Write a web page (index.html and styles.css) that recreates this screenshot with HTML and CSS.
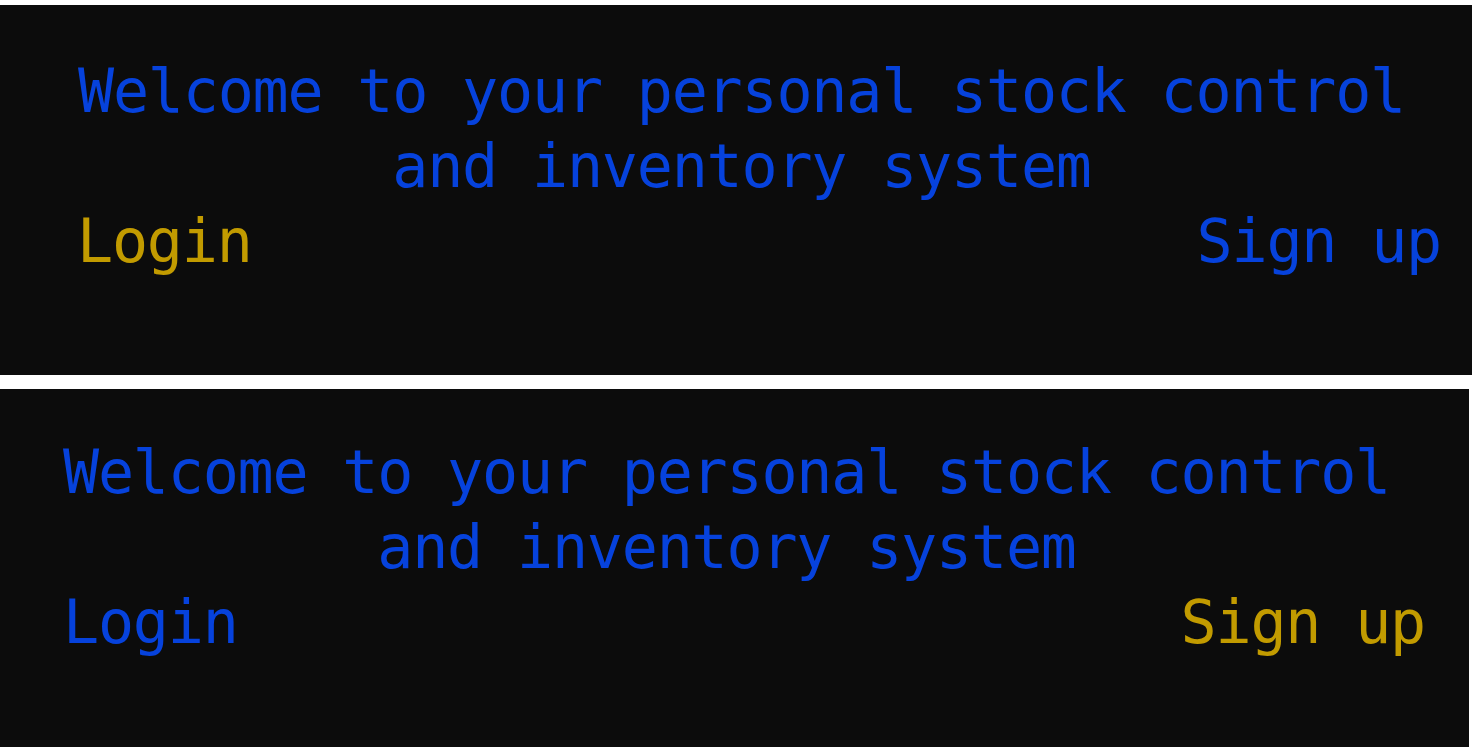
FILE: index.html
```html
<!DOCTYPE html>
<html lang="en">
<head>
<meta charset="utf-8">
<title>Stock control</title>
<link rel="stylesheet" href="styles.css">
</head>
<body>
  <section class="hero hero-login">
    <h1 class="title">Welcome to your personal stock control and inventory system</h1>
    <nav class="links">
      <a class="link active" href="#">Login</a>
      <a class="link" href="#">Sign up</a>
    </nav>
  </section>
  <section class="hero hero-signup">
    <h1 class="title">Welcome to your personal stock control and inventory system</h1>
    <nav class="links">
      <a class="link" href="#">Login</a>
      <a class="link active" href="#">Sign up</a>
    </nav>
  </section>
</body>
</html>
```
FILE: styles.css
```css
html, body {
  margin: 0;
  padding: 0;
  background: #ffffff;
}
body {
  padding-top: 5px;
  display: flex;
  flex-direction: column;
  gap: 14px;
  height: 747px;
  box-sizing: border-box;
  overflow: hidden;
}
.hero {
  background: #0c0c0c;
  font-family: "DejaVu Sans Mono", "Liberation Mono", monospace;
  font-size: 60px;
  letter-spacing: -1.2px;
  line-height: 75px;
  color: #0642dc;
  box-sizing: border-box;
}
.hero-login {
  height: 370px;
  width: 1472px;
  padding: 49px 31px 0 77px;
}
.hero-signup {
  flex: 1;
  width: 1469px;
  padding: 46px 44px 0 63px;
}
.title {
  margin: 0 -5px 0 -40px;
  font: inherit;
  text-align: center;
}
.links {
  display: flex;
  justify-content: space-between;
}
.link {
  color: #0642dc;
  text-decoration: none;
}
.link.active {
  color: #c29b00;
}
```
